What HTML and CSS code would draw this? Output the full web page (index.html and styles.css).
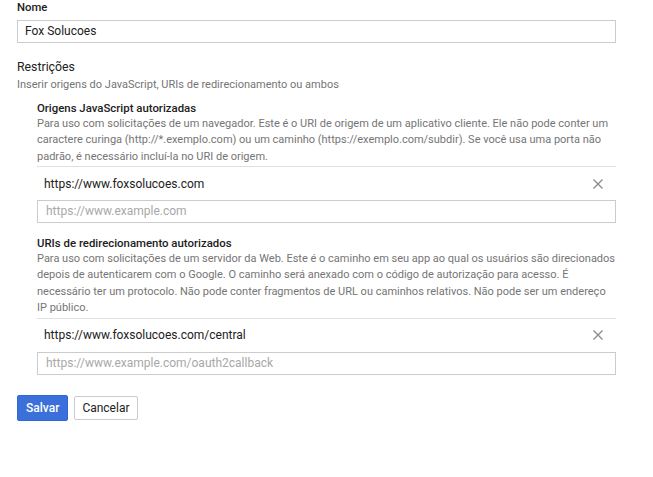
FILE: index.html
```html
<!DOCTYPE html>
<html lang="pt">
<head>
<meta charset="utf-8">
<link rel="stylesheet" href="styles.css">
</head>
<body>
<div class="page">
  <div class="field-label">Nome</div>
  <div class="input filled">Fox Solucoes</div>

  <div class="section-title">Restrições</div>
  <div class="section-sub">Inserir origens do JavaScript, URIs de redirecionamento ou ambos</div>

  <div class="group">
    <div class="group-title">Origens JavaScript autorizadas</div>
    <div class="group-desc">Para uso com solicitações de um navegador. Este é o URI de origem de um aplicativo cliente. Ele não pode conter um<br>caractere curinga (http://*.exemplo.com) ou um caminho (https://exemplo.com/subdir). Se você usa uma porta não<br>padrão, é necessário incluí-la no URI de origem.</div>
    <div class="uri-row">
      <span class="uri">https://www.foxsolucoes.com</span>
      <svg class="close" viewBox="0 0 10 10" width="10" height="10"><path d="M0.5 0.5L9.5 9.5M9.5 0.5L0.5 9.5" stroke="#8a8a8a" stroke-width="1.3" fill="none"/></svg>
    </div>
    <div class="input placeholder">https://www.example.com</div>
  </div>

  <div class="group second">
    <div class="group-title">URIs de redirecionamento autorizados</div>
    <div class="group-desc">Para uso com solicitações de um servidor da Web. Este é o caminho em seu app ao qual os usuários são direcionados<br>depois de autenticarem com o Google. O caminho será anexado com o código de autorização para acesso. É<br>necessário ter um protocolo. Não pode conter fragmentos de URL ou caminhos relativos. Não pode ser um endereço<br>IP público.</div>
    <div class="uri-row">
      <span class="uri">https://www.foxsolucoes.com/central</span>
      <svg class="close" viewBox="0 0 10 10" width="10" height="10"><path d="M0.5 0.5L9.5 9.5M9.5 0.5L0.5 9.5" stroke="#8a8a8a" stroke-width="1.3" fill="none"/></svg>
    </div>
    <div class="input placeholder">https://www.example.com/oauth2callback</div>
  </div>

  <div class="actions">
    <button class="btn primary">Salvar</button>
    <button class="btn">Cancelar</button>
  </div>
</div>
</body>
</html>
```
FILE: styles.css
```css
html, body {
  margin: 0;
  padding: 0;
  background: #fff;
}
body {
  font-family: Roboto, "Liberation Sans", Arial, sans-serif;
  color: #212121;
}
.page {
  width: 599px;
  padding: 0 0 0 17px;
}
.field-label {
  font-size: 11.3px;
  line-height: 16px;
  font-weight: 500;
  color: #212121;
}
.input {
  box-sizing: border-box;
  margin-top: 4px;
  height: 23px;
  border: 1px solid #cccccc;
  font-size: 12px;
  line-height: 21px;
  padding-left: 7px;
  color: #212121;
}
.input.placeholder {
  color: #a8a8a8;
  padding-left: 8px;
  margin-top: 0;
  height: 23px;
}
.section-title {
  margin-top: 14px;
  font-size: 12.3px;
  line-height: 20px;
  color: #212121;
}
.section-sub {
  font-size: 11px;
  line-height: 16px;
  color: #757575;
}
.group {
  margin-left: 20px;
  margin-top: 7px;
}
.group.second {
  margin-top: 12px;
}
.group-title {
  font-size: 11.4px;
  line-height: 16px;
  font-weight: 500;
  color: #212121;
}
.group-desc {
  font-size: 11px;
  line-height: 16.5px;
  color: #757575;
  padding-bottom: 1px;
  margin-top: -0.5px;
  white-space: nowrap;
}
.uri-row {
  border-top: 1px solid #e0e0e0;
  height: 33px;
  display: flex;
  align-items: center;
  justify-content: space-between;
  padding: 0 13px 0 7px;
}
.uri {
  font-size: 12px;
  color: #212121;
}
.close {
  display: block;
}
.actions {
  margin-top: 20px;
  display: flex;
  gap: 6px;
  align-items: center;
}
.btn {
  font-family: Roboto, "Liberation Sans", Arial, sans-serif;
  font-size: 12px;
  height: 24px;
  padding: 0 7px;
  border: 1px solid #cccccc;
  background: #fff;
  color: #212121;
  border-radius: 2px;
}
.btn.primary {
  background: #3b6fd9;
  border-color: #3367d6;
  color: #fff;
  height: 26px;
  padding: 0 8px;
  font-weight: 500;
}
```
